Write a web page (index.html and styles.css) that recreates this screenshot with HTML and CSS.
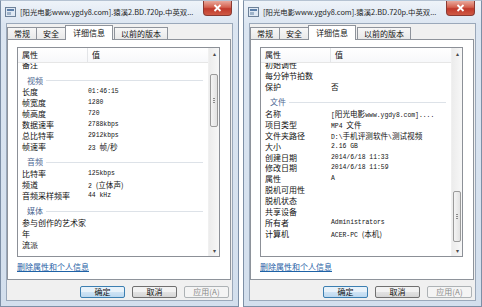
FILE: index.html
```html
<!DOCTYPE html>
<html>
<head>
<title>属性</title>
<link rel="stylesheet" href="styles.css">
</head>
<body>
<div class="desk">
	<div class="window">
		<div class="titlebar">
			<svg class="app-icon" width="11" height="10" viewBox="0 0 11 10"><rect x="0.5" y="0.5" width="10" height="9" fill="#dfe8f3" stroke="#6d8199"/><rect x="2" y="2" width="7" height="2" fill="#5c7ea8"/><rect x="2" y="5" width="4" height="3" fill="#9fb3c9"/></svg>
			<span class="title">[阳光电影www.ygdy8.com].猿溪2.BD.720p.中英双...</span>
			<span class="close"><svg width="9" height="8" viewBox="0 0 9 8"><path d="M1.5 1 L7.5 7 M7.5 1 L1.5 7" stroke="#fff" stroke-width="1.8"/></svg></span>
		</div>
		<div class="client">
			<div class="tabs">
				<span class="tab">常规</span>
				<span class="tab">安全</span>
				<span class="tab active">详细信息</span>
				<span class="tab">以前的版本</span>
			</div>
			<div class="page">
				<div class="listbox">
					<div class="list">
						<div class="head"><span class="hcol name">属性</span><span class="hcol">值</span></div>
						<div class="rows">
							<div class="inner">
								<div class="row"><span class="name">备注</span></div>
								<div class="group"><span>视频</span></div>
								<div class="row"><span class="name">长度</span><span class="val">01:46:15</span></div>
								<div class="row"><span class="name">帧宽度</span><span class="val">1280</span></div>
								<div class="row"><span class="name">帧高度</span><span class="val">720</span></div>
								<div class="row"><span class="name">数据速率</span><span class="val">2788kbps</span></div>
								<div class="row"><span class="name">总比特率</span><span class="val">2912kbps</span></div>
								<div class="row"><span class="name">帧速率</span><span class="val">23 <span class="cn">帧/秒</span></span></div>
								<div class="group"><span>音频</span></div>
								<div class="row"><span class="name">比特率</span><span class="val">125kbps</span></div>
								<div class="row"><span class="name">频道</span><span class="val">2 <span class="cn">(立体声)</span></span></div>
								<div class="row"><span class="name">音频采样频率</span><span class="val">44 kHz</span></div>
								<div class="group"><span>媒体</span></div>
								<div class="row"><span class="name">参与创作的艺术家</span></div>
								<div class="row"><span class="name">年</span></div>
								<div class="row"><span class="name">流派</span></div>
							</div>
						</div>
					</div>
					<div class="scrollbar">
						<span class="arrow">&#9652;</span>
						<div class="track"><span class="thumb" style="margin-top: 15px; height: 53px;"></span></div>
						<span class="arrow">&#9662;</span>
					</div>
				</div>
				<a class="link" href="#">删除属性和个人信息</a>
			</div>
			<div class="buttons">
				<button class="btn default">确定</button>
				<button class="btn">取消</button>
				<button class="btn" disabled>应用(A)</button>
			</div>
		</div>
	</div>

	<div class="window">
		<div class="titlebar">
			<svg class="app-icon" width="11" height="10" viewBox="0 0 11 10"><rect x="0.5" y="0.5" width="10" height="9" fill="#dfe8f3" stroke="#6d8199"/><rect x="2" y="2" width="7" height="2" fill="#5c7ea8"/><rect x="2" y="5" width="4" height="3" fill="#9fb3c9"/></svg>
			<span class="title">[阳光电影www.ygdy8.com].猿溪2.BD.720p.中英双...</span>
			<span class="close"><svg width="9" height="8" viewBox="0 0 9 8"><path d="M1.5 1 L7.5 7 M7.5 1 L1.5 7" stroke="#fff" stroke-width="1.8"/></svg></span>
		</div>
		<div class="client">
			<div class="tabs">
				<span class="tab">常规</span>
				<span class="tab">安全</span>
				<span class="tab active">详细信息</span>
				<span class="tab">以前的版本</span>
			</div>
			<div class="page">
				<div class="listbox">
					<div class="list">
						<div class="head"><span class="hcol name">属性</span><span class="hcol">值</span></div>
						<div class="rows">
							<div class="inner">
								<div class="row"><span class="name">初始调性</span></div>
								<div class="row"><span class="name">每分钟节拍数</span></div>
								<div class="row"><span class="name">保护</span><span class="val"><span class="cn">否</span></span></div>
								<div class="group"><span>文件</span></div>
								<div class="row"><span class="name">名称</span><span class="val">[<span class="cn">阳光电影</span>www.ygdy8.com]....</span></div>
								<div class="row"><span class="name">项目类型</span><span class="val">MP4 <span class="cn">文件</span></span></div>
								<div class="row"><span class="name">文件夹路径</span><span class="val">D:\<span class="cn">手机评测软件</span>\<span class="cn">测试视频</span></span></div>
								<div class="row"><span class="name">大小</span><span class="val">2.16 GB</span></div>
								<div class="row"><span class="name">创建日期</span><span class="val">2014/6/18 11:33</span></div>
								<div class="row"><span class="name">修改日期</span><span class="val">2014/6/18 11:59</span></div>
								<div class="row"><span class="name">属性</span><span class="val">A</span></div>
								<div class="row"><span class="name">脱机可用性</span></div>
								<div class="row"><span class="name">脱机状态</span></div>
								<div class="row"><span class="name">共享设备</span></div>
								<div class="row"><span class="name">所有者</span><span class="val">Administrators</span></div>
								<div class="row"><span class="name">计算机</span><span class="val">ACER-PC <span class="cn">(本机)</span></span></div>
							</div>
						</div>
					</div>
					<div class="scrollbar">
						<span class="arrow">&#9652;</span>
						<div class="track"><span class="thumb" style="margin-top: 132px; height: 51px;"></span></div>
						<span class="arrow">&#9662;</span>
					</div>
				</div>
				<a class="link" href="#">删除属性和个人信息</a>
			</div>
			<div class="buttons">
				<button class="btn default">确定</button>
				<button class="btn">取消</button>
				<button class="btn" disabled>应用(A)</button>
			</div>
		</div>
	</div>
</div>
</body>
</html>
```

FILE: styles.css
```css
* {
	box-sizing: border-box;
}
body {
	margin: 0;
	background: #fff;
	font-family: "Noto Sans CJK SC", "Noto Sans", sans-serif;
	font-size: 8px;
	color: #111;
}
.desk {
	display: flex;
	gap: 4px;
	width: 482px;
	height: 307px;
}
.window {
	width: 239px;
	height: 307px;
	border: 1px solid #7d8fa6;
	border-top-color: #b5c2d2;
	background: linear-gradient(#eef3f9, #dbe5f1 24px, #d3dfed);
	padding: 0 5px 5px 5px;
	display: flex;
	flex-direction: column;
}
.titlebar {
	height: 22px;
	display: flex;
	align-items: flex-start;
}
.app-icon {
	margin: 6px 4px 0 -1px;
	flex: none;
}
.title {
	flex: 1;
	margin-top: 5px;
	white-space: nowrap;
	overflow: hidden;
	font-size: 7.4px;
	line-height: 11px;
	color: #1e1e1e;
}
.close {
	flex: none;
	width: 29px;
	height: 15px;
	margin-right: 1px;
	border: 1px solid #8a3a32;
	border-top: none;
	border-radius: 0 0 4px 4px;
	background: linear-gradient(#e9a99c, #d4614f 45%, #c0392b 55%, #cf5a45);
	display: flex;
	align-items: center;
	justify-content: center;
}
.client {
	flex: 1;
	background: #f0f0f0;
	border: 1px solid #9aa8ba;
	padding: 1px 1px 0 0;
	display: flex;
	flex-direction: column;
}
.tabs {
	display: flex;
	align-items: flex-end;
	height: 14px;
	position: relative;
	z-index: 1;
}
.tab {
	height: 12px;
	padding: 0 6px;
	line-height: 11px;
	border: 1px solid #8e939b;
	border-bottom: none;
	margin-right: -1px;
	background: linear-gradient(#f7f7f7, #e9e9e9);
}
.tab.active {
	height: 15px;
	margin: 0 1px -1px 0;
	padding: 0 7px;
	line-height: 13px;
	background: #fff;
}
.page {
	height: 241px;
	border: 1px solid #8e939b;
	background: #fff;
	padding: 7px 10px 0 9px;
}
.listbox {
	height: 210px;
	border: 1px solid #8c9097;
	display: flex;
}
.list {
	flex: 1;
	display: flex;
	flex-direction: column;
	min-width: 0;
}
.head {
	height: 15px;
	display: flex;
	border-bottom: 1px solid #e6e6e6;
	background: linear-gradient(#fff, #f7f8fa);
}
.hcol {
	line-height: 14px;
	padding-left: 4px;
}
.hcol.name {
	border-right: 1px solid #e3e5e8;
}
.name {
	width: 70px;
	flex: none;
	padding-left: 4px;
	white-space: nowrap;
}
.rows {
	flex: 1;
	overflow: hidden;
}
.inner {
	margin-top: -3px;
}
.row {
	display: flex;
	height: 10.9px;
	line-height: 10.9px;
}
.val {
	font-family: "Liberation Mono", "Noto Sans CJK SC", monospace;
	font-size: 6.4px;
	white-space: nowrap;
}
.val .cn {
	font-family: "Noto Sans CJK SC", sans-serif;
	font-size: 7.6px;
}
.group {
	height: 16.3px;
	padding: 3px 5px 0 9px;
	display: flex;
	align-items: center;
	line-height: 10px;
	gap: 3px;
}
.group span {
	color: #4d6791;
	height: 10px;
}
.group::after {
	content: "";
	flex: 1;
	height: 1px;
	background: #dde2e8;
}
.scrollbar {
	width: 11px;
	flex: none;
	display: flex;
	flex-direction: column;
	background: linear-gradient(90deg, #ececec, #f7f7f7);
	border-left: 1px solid #f0f0f0;
}
.arrow {
	height: 11px;
	font-size: 6px;
	line-height: 11px;
	text-align: center;
	color: #4a4a4a;
}
.track {
	flex: 1;
	display: flex;
	flex-direction: column;
}
.thumb {
	display: block;
	margin: 0 1px;
	border: 1px solid #9a9a9a;
	border-radius: 2px;
	background: linear-gradient(90deg, #f4f4f4, #e2e2e2);
	position: relative;
}
.thumb::after {
	content: "";
	position: absolute;
	left: 2px;
	right: 2px;
	top: 50%;
	height: 5px;
	margin-top: -3px;
	background: repeating-linear-gradient(#8a8a8a 0 1px, transparent 1px 2px);
}
.link {
	display: inline-block;
	margin-top: 5px;
	line-height: 10px;
	color: #1f62a6;
	text-decoration: underline;
}
.buttons {
	display: flex;
	justify-content: flex-end;
	gap: 7px;
	padding: 6px 2px 0 0;
}
.btn {
	width: 45px;
	height: 12px;
	padding: 0;
	font: inherit;
	line-height: 10px;
	color: #111;
	border: 1px solid #707070;
	border-radius: 2px;
	background: linear-gradient(#f2f2f2 50%, #e3e3e3 50%, #d6d6d6);
}
.btn.default {
	border-color: #3c7fb1;
	background: linear-gradient(#e8f2fa 50%, #cfe4f5 50%, #bcd8ef);
}
.btn:disabled {
	border-color: #adb2b5;
	color: #8b8b8b;
	background: #f4f4f4;
}
```
